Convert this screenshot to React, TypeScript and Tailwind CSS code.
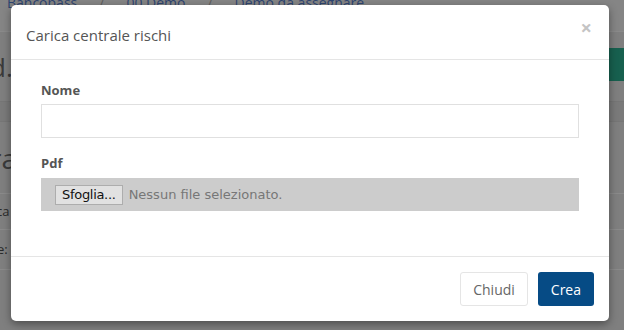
import {FC} from "react";

const Backdrop: FC = () => (
  <div className="flex h-[330px] w-[624px] flex-col overflow-hidden bg-[#7f7f7f] font-['Open_Sans',sans-serif]">
    {/* breadcrumb, mostly under the modal */}
    <div className="-mt-[8px] flex h-[40px] items-start gap-[22px] border-b border-[#8a8a8a] bg-[#858585] pl-[7px] text-[14px] text-[#2e4470]">
      <span>Bancobass</span>
      <span className="text-[#5d5d5d]">/</span>
      <span>00 Demo</span>
      <span className="text-[#5d5d5d]">/</span>
      <span>Demo da assegnare</span>
    </div>
    <div className="flex h-[70px] items-center justify-between border-b border-[#767676]">
      <span className="-ml-[10px] text-[26px] leading-none text-[#3a3a3a]">d.</span>
      <div className="mb-[4px] h-[33px] w-[20px] rounded-l-[4px] bg-[#17604f]" />
    </div>
    <div className="h-[20px] border-b border-[#767676] bg-[#7a7a7a]" />
    <div className="flex h-[72px] items-center border-b border-[#8a8a8a]">
      <span className="-ml-[10px] text-[28px] leading-none text-[#3a3a3a]">ra</span>
    </div>
    <div className="flex h-[36px] items-center border-b border-[#8a8a8a]">
      <span className="-ml-[4px] text-[13px] text-[#2a2a2a]">ca</span>
    </div>
    <div className="flex h-[40px] items-center border-b border-[#8a8a8a]">
      <span className="-ml-[3px] text-[13px] text-[#2a2a2a]">e:</span>
    </div>
  </div>
);

const FileField: FC = () => (
  <div className="flex h-[33px] items-center bg-[#cccccc] pl-[14px] font-['DejaVu_Sans',sans-serif] text-[13px]">
    <span className="flex h-[20px] items-center border border-[#adadad] bg-[#e1e1e1] px-[6px] tracking-[-0.3px] text-[#111]">
      Sfoglia...
    </span>
    <span className="ml-[6px] text-[#777]">Nessun file selezionato.</span>
  </div>
);

export default function App() {
  return (
    <div className="relative h-[330px] w-[624px] overflow-hidden">
      <Backdrop />
      {/* modal */}
      <div className="absolute left-[11px] top-[5px] flex h-[316px] w-[598px] flex-col rounded-[5px] bg-white font-['Open_Sans',sans-serif] shadow-[0_3px_9px_rgba(0,0,0,0.4)]">
        <div className="flex h-[55px] items-center justify-between border-b border-[#e5e5e5] px-[15px] pt-[6px]">
          <h4 className="text-[15px] text-[#555]">Carica centrale rischi</h4>
          <span className="-mt-[14px] mr-[2px] text-[20px] font-bold leading-none text-[#c4c4c4]">×</span>
        </div>
        <div className="flex flex-1 flex-col px-[30px] pt-[21px]">
          <label className="text-[13px] font-bold leading-[18px] text-[#555]">Nome</label>
          <input className="mt-[5px] h-[34px] w-full border border-[#e0e0e0] px-[10px] outline-none" />
          <label className="mt-[16px] text-[13px] font-bold leading-[18px] text-[#555]">Pdf</label>
          <div className="mt-[6px]">
            <FileField />
          </div>
        </div>
        <div className="flex h-[65px] items-start justify-end gap-[10px] border-t border-[#e5e5e5] px-[15px] pt-[15px]">
          <button className="h-[34px] rounded-[3px] border border-[#e5e5e5] bg-white px-[12px] text-[14px] text-[#666]">
            Chiudi
          </button>
          <button className="h-[34px] rounded-[3px] bg-[#064b85] px-[13px] text-[14px] text-white">
            Crea
          </button>
        </div>
      </div>
    </div>
  );
}
